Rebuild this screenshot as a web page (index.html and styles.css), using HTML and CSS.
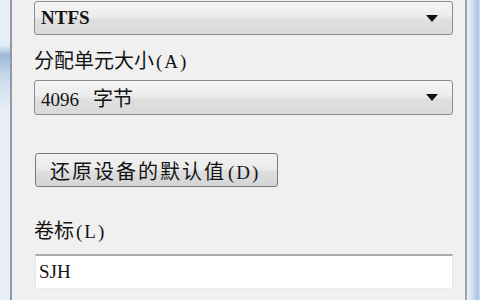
FILE: index.html
```html
<!DOCTYPE html>
<html>
<head>
    <title>格式化</title>
    <link rel="stylesheet" href="styles.css">
</head>
<body>
    <div class="ventana">
        <div class="borde-izq"></div>
        <div class="dialogo">
            <div class="combo primero">
                <span class="lat negrita">NTFS</span>
                <span class="flecha"></span>
            </div>
            <div class="etiqueta">分配单元大小<span class="lat par">(A)</span></div>
            <div class="combo">
                <span><span class="lat">4096</span><span class="espacio">字节</span></span>
                <span class="flecha"></span>
            </div>
            <button class="boton">还原设备的默认值<span class="lat par">(D)</span></button>
            <div class="etiqueta segunda">卷标<span class="lat par">(L)</span></div>
            <div class="campo"><span class="lat">SJH</span></div>
        </div>
        <div class="borde-der"></div>
    </div>
</body>
</html>
```

FILE: styles.css
```css
/* Estilo general */
body {
    margin: 0;
    width: 480px;
    height: 300px;
    overflow: hidden;
    font-family: "Noto Sans CJK SC", sans-serif;
    font-size: 20px;
    color: #141414;
    background-color: #f0f0f0;
}
.ventana {
    display: flex;
    height: 300px;
}
.borde-izq {
    width: 10px;
    background: linear-gradient(to bottom, #e6eef6 0, #e6eef6 45px, #9db8d6 55px, #c8d8ea 75px, #e8eff6 110px, #e8eff6 100%);
    border-right: 2px solid #8f9aa6;
}
.borde-der {
    width: 13px;
    border-left: 2px solid #9ba3ab;
    background: linear-gradient(to right, #eef3f8 0, #cfdeee 6px, #a9c3e0 11px, #cfe0f1 13px);
}
.dialogo {
    flex: 1;
    padding: 1px 0 0 22px;
}
.lat {
    font-family: "Liberation Serif", serif;
    font-size: 19px;
}
.par {
    margin-left: 2px;
    letter-spacing: 2px;
}
.espacio {
    margin-left: 14px;
}
.negrita {
    font-weight: bold;
}
.combo {
    box-sizing: border-box;
    width: 419px;
    height: 35px;
    border: 1px solid #8c8c8c;
    border-radius: 3px;
    background: linear-gradient(to bottom, #f4f4f4 0, #ededed 45%, #e0e0e0 55%, #d9d9d9 100%);
    display: flex;
    align-items: center;
    justify-content: space-between;
    padding: 0 14px 0 6px;
    margin-top: 8px;
}
.combo.primero {
    height: 34px;
    margin-top: 0;
}
.flecha {
    width: 0;
    height: 0;
    border-left: 6px solid transparent;
    border-right: 6px solid transparent;
    border-top: 7px solid #111;
}
.etiqueta {
    height: 24px;
    line-height: 24px;
    margin-top: 13px;
}
.etiqueta.segunda {
    margin-top: 31px;
}
.boton {
    box-sizing: border-box;
    display: block;
    width: 243px;
    height: 34px;
    margin: 38px 0 0 1px;
    padding: 0 0 0 14px;
    text-align: left;
    border: 1px solid #7a7a7a;
    border-radius: 3px;
    background: linear-gradient(to bottom, #f3f3f3 0, #ebebeb 45%, #dedede 55%, #d4d4d4 100%);
    font-family: "Noto Sans CJK SC", sans-serif;
    font-size: 20px;
    letter-spacing: 2px;
    color: #141414;
}
.campo {
    box-sizing: border-box;
    width: 418px;
    height: 35px;
    margin: 12px 0 0 1px;
    background-color: #fff;
    border-top: 2px solid #a9a9a9;
    border-left: 1px solid #e2e6ea;
    border-right: 1px solid #e2e6ea;
    border-bottom: 1px solid #e8ebee;
    display: flex;
    align-items: center;
    padding-left: 3px;
}
```
